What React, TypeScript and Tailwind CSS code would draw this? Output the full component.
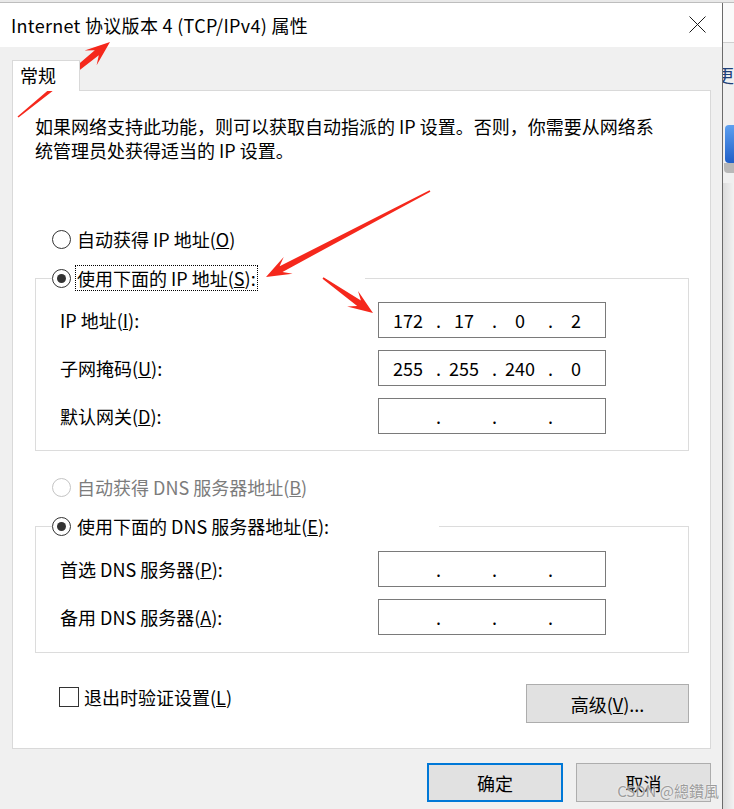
import type { ReactNode } from 'react'

const font = "font-['Noto_Sans_CJK_SC','Noto_Sans',sans-serif]"

// red annotation arrows, tail -> tip
const arrows = [
  { x1: 18, y1: 117, x2: 110, y2: 42 },
  { x1: 430, y1: 191, x2: 266, y2: 277 },
  { x1: 323, y1: 278, x2: 373, y2: 313 },
]

function arrowPoints(x1: number, y1: number, x2: number, y2: number) {
  const dx = x2 - x1
  const dy = y2 - y1
  const len = Math.hypot(dx, dy)
  const ux = dx / len
  const uy = dy / len
  const px = -uy
  const py = ux
  const P = (t: number, o: number) => `${(x1 + ux * t + px * o).toFixed(1)},${(y1 + uy * t + py * o).toFixed(1)}`
  return [
    P(0, 0.8),
    P(len - 17, 3.2),
    P(len - 25, 9.5),
    P(len, 0),
    P(len - 25, -9.5),
    P(len - 17, -3.2),
    P(0, -0.8),
  ].join(' ')
}

function Radio({ checked, disabled }: { checked?: boolean; disabled?: boolean }) {
  return (
    <span
      className={`w-[19px] h-[19px] shrink-0 rounded-full border bg-white flex items-center justify-center ${disabled ? 'border-[#c4c4c4]' : 'border-[#333333]'}`}
    >
      {checked && <span className="w-[9px] h-[9px] rounded-full bg-[#333333]" />}
    </span>
  )
}

function RadioRow({ children, checked, disabled, focused }: { children: ReactNode; checked?: boolean; disabled?: boolean; focused?: boolean }) {
  return (
    <div className="flex items-center h-[26px]">
      <Radio checked={checked} disabled={disabled} />
      <span
        className={`ml-[4px] px-[1px] h-[26px] flex items-center border ${focused ? 'border-dotted border-black' : 'border-transparent'} ${disabled ? 'text-[#7c7c7c]' : 'text-black'}`}
      >
        {children}
      </span>
    </div>
  )
}

function IpBox({ parts }: { parts: string[] }) {
  return (
    <div className="w-[228px] h-[36px] border border-[#7a7a7a] bg-white flex items-center pl-[7px]">
      {parts.map((p, i) => (
        <div key={i} className="flex items-center">
          <span className="w-[44px] text-center">{p}</span>
          {i < 3 && <span className="w-[12px] text-right pr-[1px]">.</span>}
        </div>
      ))}
    </div>
  )
}

function FieldRow({ label, parts }: { label: ReactNode; parts: string[] }) {
  return (
    <div className="flex items-center h-[36px]">
      <div className="w-[318px]">{label}</div>
      <IpBox parts={parts} />
    </div>
  )
}

function WinButton({ children, primary, className = '' }: { children: ReactNode; primary?: boolean; className?: string }) {
  return (
    <div
      className={`h-[39px] flex items-center justify-center bg-[#e1e1e1] ${primary ? 'border-2 border-[#0078d7]' : 'border border-[#adadad]'} ${className}`}
    >
      {children}
    </div>
  )
}

export default function App() {
  const empty = ['', '', '', '']

  return (
    <div className={`relative w-[734px] h-[809px] overflow-hidden bg-[#f0f0f0] text-[18px] leading-[24px] text-black ${font}`}>
      {/* window behind, top edge */}
      <div className="h-[3px] bg-[#e9e9e9] border-b border-[#bdbdbd]" />

      <div className="flex h-[806px]">
        {/* dialog */}
        <div className="w-[723px] border-r border-[#6b6b6b] flex flex-col">
          <div className="h-[44px] bg-white flex items-center justify-between pl-[11px] pr-[16px]">
            <span className="tracking-[0.3px]">Internet 协议版本 4 (TCP/IPv4) 属性</span>
            <svg width="17" height="17" viewBox="0 0 17 17" className="mt-[-2px]">
              <path d="M0.5 0.5 L16.5 16.5 M16.5 0.5 L0.5 16.5" stroke="#1a1a1a" strokeWidth="1" />
            </svg>
          </div>

          <div className="flex-1 bg-[#f0f0f0] pt-[13px] pl-[12px]">
            <div className="relative z-10 -mb-px w-[68px] h-[31px] bg-white border border-b-0 border-[#d9d9d9] pl-[7px] pt-[2px]">
              常规
            </div>

            <div className="w-[699px] h-[659px] bg-white border border-[#d9d9d9] pl-[22px] pr-[20px] pt-[23px]">
              <p>
                如果网络支持此功能，则可以获取自动指派的 IP 设置。否则，你需要从网络系
                <br />
                统管理员处获得适当的 IP 设置。
              </p>

              <div className="mt-[64px] ml-[17px]">
                <RadioRow>
                  自动获得 IP 地址(<u>O</u>)
                </RadioRow>
              </div>

              <fieldset className="mt-[13px] w-[654px] border border-[#dcdcdc]">
                <legend className="ml-[16px] w-[313px]">
                  <RadioRow checked focused>
                    使用下面的 IP 地址(<u>S</u>):
                  </RadioRow>
                </legend>
                <div className="pl-[24px] pt-[11px] pb-[16px] flex flex-col gap-[12px]">
                  <FieldRow label={<>IP 地址(<u>I</u>):</>} parts={['172', '17', '0', '2']} />
                  <FieldRow label={<>子网掩码(<u>U</u>):</>} parts={['255', '255', '240', '0']} />
                  <FieldRow label={<>默认网关(<u>D</u>):</>} parts={empty} />
                </div>
              </fieldset>

              <div className="mt-[23px] ml-[17px]">
                <RadioRow disabled>
                  自动获得 DNS 服务器地址(<u>B</u>)
                </RadioRow>
              </div>

              <fieldset className="mt-[13px] w-[654px] border border-[#dcdcdc]">
                <legend className="ml-[16px] w-[387px]">
                  <RadioRow checked>
                    使用下面的 DNS 服务器地址(<u>E</u>):
                  </RadioRow>
                </legend>
                <div className="pl-[24px] pt-[12px] pb-[17px] flex flex-col gap-[12px]">
                  <FieldRow label={<>首选 DNS 服务器(<u>P</u>):</>} parts={empty} />
                  <FieldRow label={<>备用 DNS 服务器(<u>A</u>):</>} parts={empty} />
                </div>
              </fieldset>

              <div className="mt-[31px] w-[654px] flex items-start justify-between">
                <div className="flex items-center ml-[24px] mt-[1px] h-[24px]">
                  <span className="w-[20px] h-[20px] border border-[#333333] bg-white" />
                  <span className="ml-[5px]">
                    退出时验证设置(<u>L</u>)
                  </span>
                </div>
                <WinButton className="w-[163px]">
                  高级(<u>V</u>)...
                </WinButton>
              </div>
            </div>

            <div className="mt-[14px] pr-[11px] flex justify-end gap-[13px]">
              <WinButton primary className="w-[136px]">
                确定
              </WinButton>
              <WinButton className="w-[135px]">取消</WinButton>
            </div>
          </div>
        </div>

        {/* sliver of the window behind */}
        <div className="flex-1 overflow-hidden flex flex-col bg-gradient-to-r from-[#dcdcdc] to-[#f2f2f2]">
          <div className="h-[40px] bg-[#fafafa] border-b border-[#cfcfcf]" />
          <div className="h-[80px] bg-[#f0f0f0] pt-[20px]">
            <span className="block -ml-[7px] whitespace-nowrap text-[#1f3f77]">更改</span>
          </div>
          <div className="h-[60px] bg-[#f0f0f0] pt-[2px]">
            <div className="ml-[2px] w-[30px] h-[38px] rounded-[4px] bg-gradient-to-b from-[#5ea0f0] to-[#1f5fc8]" />
            <div className="ml-[1px] w-[30px] h-[10px] rounded-b-[4px] bg-[#b8b8b8]" />
          </div>
        </div>
      </div>

      {/* annotation arrows */}
      <svg className="absolute inset-0 pointer-events-none" width="734" height="809">
        {arrows.map((a, i) => (
          <polygon key={i} points={arrowPoints(a.x1, a.y1, a.x2, a.y2)} fill="#f5281c" />
        ))}
      </svg>

      {/* watermark */}
      <div className="absolute right-[15px] bottom-[9px] text-[15px] leading-[18px] text-[#9c9c9c] [text-shadow:0_0_2px_#ffffff]">
        CSDN @總鑽風
      </div>
    </div>
  )
}
